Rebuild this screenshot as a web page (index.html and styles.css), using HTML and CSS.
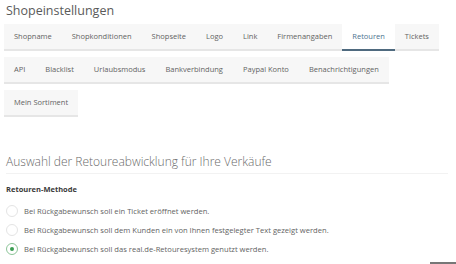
FILE: index.html
```html
<!DOCTYPE html>
<html lang="de">
<head>
    <meta charset="UTF-8">
    <meta name="viewport" content="width=device-width, initial-scale=1.0">
    <title>Shopeinstellungen</title>
    <link rel="stylesheet" href="styles.css">
</head>
<body>
    <div class="page">
        <h1 class="page-title">Shopeinstellungen</h1>

        <ul class="tabs">
            <li class="tab">Shopname</li>
            <li class="tab">Shopkonditionen</li>
            <li class="tab">Shopseite</li>
            <li class="tab">Logo</li>
            <li class="tab">Link</li>
            <li class="tab">Firmenangaben</li>
            <li class="tab active">Retouren</li>
            <li class="tab">Tickets</li>
            <li class="tab">API</li>
            <li class="tab">Blacklist</li>
            <li class="tab">Urlaubsmodus</li>
            <li class="tab">Bankverbindung</li>
            <li class="tab">Paypal Konto</li>
            <li class="tab">Benachrichtigungen</li>
            <li class="tab">Mein Sortiment</li>
        </ul>

        <h2 class="section-title">Auswahl der Retoureabwicklung für Ihre Verkäufe</h2>

        <div class="form-group">
            <div class="group-label">Retouren-Methode</div>
            <label class="radio">
                <span class="radio-dot"></span>
                Bei Rückgabewunsch soll ein Ticket eröffnet werden.
            </label>
            <label class="radio">
                <span class="radio-dot"></span>
                Bei Rückgabewunsch soll dem Kunden ein von Ihnen festgelegter Text gezeigt werden.
            </label>
            <label class="radio checked">
                <span class="radio-dot"></span>
                Bei Rückgabewunsch soll das real.de-Retouresystem genutzt werden.
            </label>
        </div>

        <div class="actions">
            <span class="save-btn"></span>
        </div>
    </div>
</body>
</html>
```

FILE: styles.css
```css
body {
    margin: 0;
    font-family: 'Open Sans', 'Liberation Sans', sans-serif;
    color: #555;
    background: #fff;
}
.page {
    padding: 0 8px 0 4px;
    height: 264px;
    overflow: hidden;
}
.page-title {
    margin: 0;
    padding: 1px 0 0 2px;
    font-size: 12.5px;
    font-weight: 400;
    line-height: 20px;
    color: #5a5a5a;
}
.tabs {
    list-style: none;
    margin: 3px 0 0 0;
    padding: 0;
    display: flex;
    flex-wrap: wrap;
}
.tab {
    background: #f7f7f7;
    border-bottom: 2px solid #e6e6e6;
    padding: 0 10px;
    height: 25px;
    line-height: 25px;
    font-size: 7.5px;
    color: #636363;
    margin-bottom: 6px;
}
.tab.active {
    background: #fff;
    color: #4d7390;
    border-bottom-color: #4f6a7f;
}
.section-title {
    margin: 31px 0 0 2px;
    padding-bottom: 3px;
    font-size: 12px;
    font-weight: 300;
    line-height: 16px;
    color: #6a6a6a;
    border-bottom: 1px solid #f2f2f2;
}
.form-group {
    margin: 8px 0 0 2px;
}
.group-label {
    font-size: 7.5px;
    font-weight: 700;
    color: #3a3a3a;
    line-height: 14px;
    margin-bottom: 5px;
}
.radio {
    display: flex;
    align-items: center;
    gap: 6px;
    height: 19px;
    font-size: 7.6px;
    color: #636363;
}
.radio-dot {
    width: 10px;
    height: 10px;
    border: 1px solid #e4e4e4;
    border-radius: 50%;
    display: flex;
    align-items: center;
    justify-content: center;
}
.radio.checked .radio-dot {
    border-color: #8cc598;
}
.radio.checked .radio-dot::after {
    content: "";
    width: 4px;
    height: 4px;
    border-radius: 50%;
    background: #3a9c52;
}
.actions {
    display: flex;
    justify-content: flex-end;
    margin: 4px -8px 0 0;
}
.save-btn {
    width: 26px;
    height: 3px;
    background: #777;
}
```
